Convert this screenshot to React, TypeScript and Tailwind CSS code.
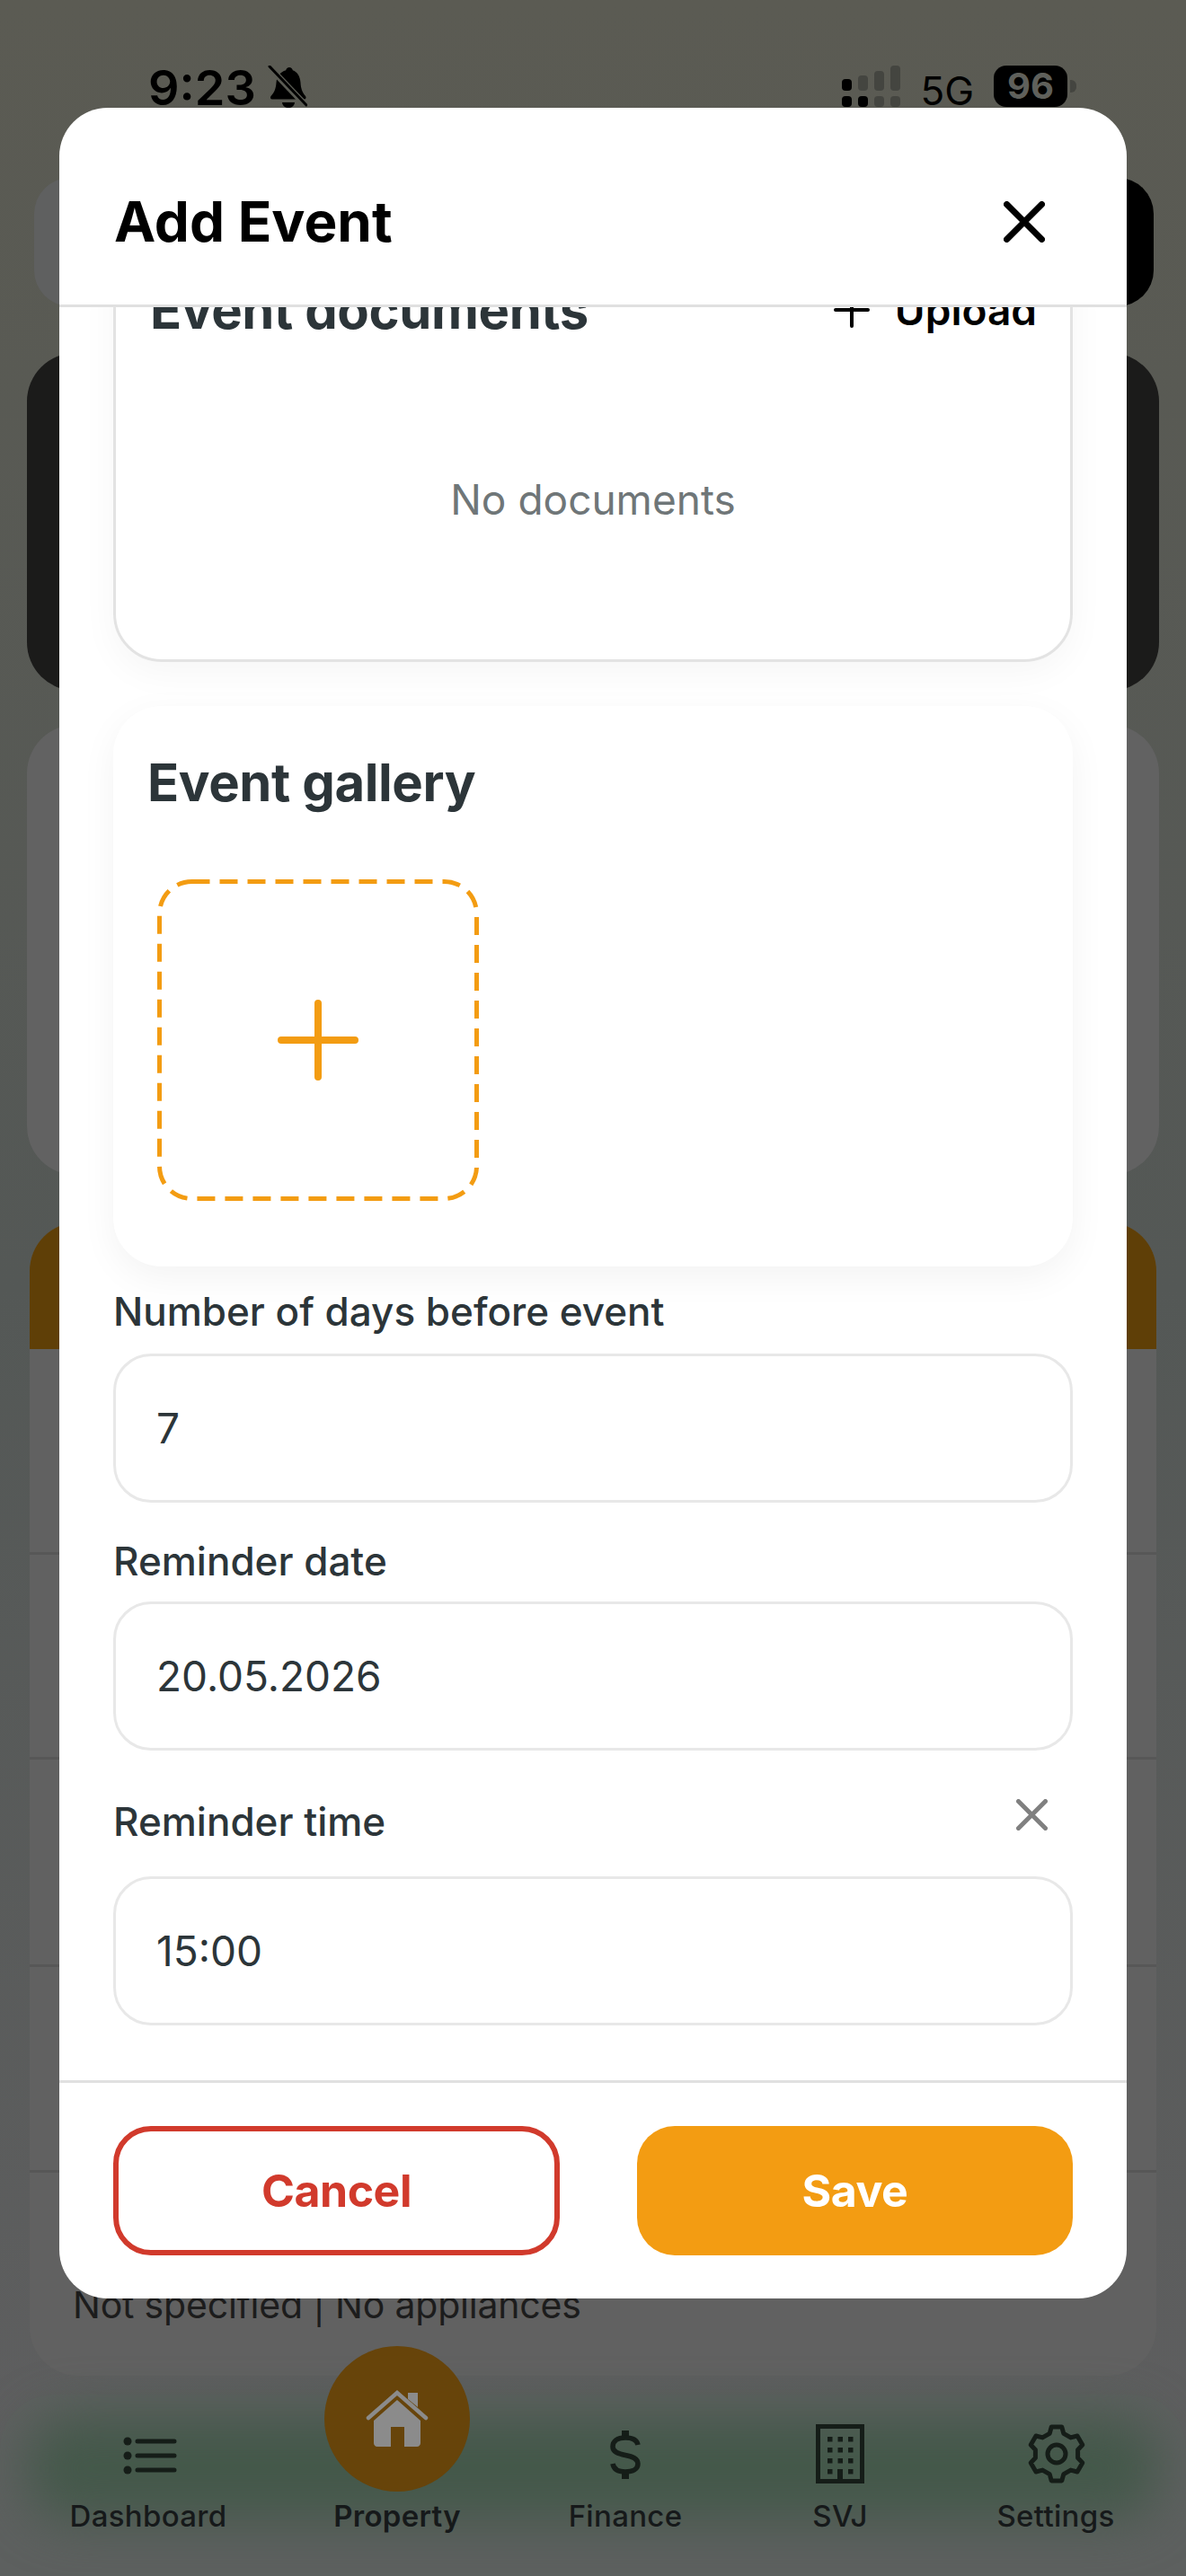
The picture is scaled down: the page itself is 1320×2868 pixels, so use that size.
const font = { fontFamily: 'Inter, sans-serif' };

const NAV = ['Dashboard', 'Property', 'Finance', 'SVJ', 'Settings'];
const NAV_X = [165, 442, 696, 935, 1175];

function Cross({ size, stroke, className }: { size: number; stroke: number; className?: string }) {
  return (
    <svg width={size} height={size} viewBox={`0 0 ${size} ${size}`} className={className} fill="none" stroke="currentColor" strokeWidth={stroke} strokeLinecap="round">
      <path d={`M${stroke / 2} ${stroke / 2}L${size - stroke / 2} ${size - stroke / 2}M${size - stroke / 2} ${stroke / 2}L${stroke / 2} ${size - stroke / 2}`} />
    </svg>
  );
}

function Plus({ size, stroke, className }: { size: number; stroke: number; className?: string }) {
  return (
    <svg width={size} height={size} viewBox={`0 0 ${size} ${size}`} className={className} fill="none" stroke="currentColor" strokeWidth={stroke} strokeLinecap="round">
      <path d={`M${size / 2} ${stroke / 2}V${size - stroke / 2}M${stroke / 2} ${size / 2}H${size - stroke / 2}`} />
    </svg>
  );
}

function BellOff() {
  return (
    <svg width="44" height="50" viewBox="0 0 44 50" className="mt-[3px] ml-[13px]">
      <path d="M24 2c2 0 3.500 1.500 3.800 3.200C33 7 36 12 36.500 19c.4 6 1.500 10 5.500 15 1.200 1.500.5 3.500-1.500 3.500H5c-2 0-2.700-2-1.500-3.500C8 29 9 25 9.500 19 10 12 14 7 20.200 5.200 20.500 3.500 22 2 24 2z" fill="#000" />
      <path d="M16 41h14c-.5 4-3.500 6-7 6s-6.500-2-7-6z" fill="#000" />
      <path d="M1 1l42 44" stroke="#5a5b53" strokeWidth="7" />
      <path d="M2 1l41 43" stroke="#000" strokeWidth="3" strokeLinecap="round" />
    </svg>
  );
}

function Signal() {
  const cols = [
    { h: 13, top: 'bg-black', bottom: 'bg-black' },
    { h: 17, top: 'bg-[#444540]', bottom: 'bg-black' },
    { h: 22, top: 'bg-[#444540]', bottom: 'bg-[#444540]' },
    { h: 28, top: 'bg-[#444540]', bottom: 'bg-[#444540]' },
  ];
  return (
    <div className="flex items-end gap-[7px]">
      {cols.map((c, i) => (
        <div key={i} className="flex flex-col gap-[6px]">
          <div className={`w-[11px] rounded-[4px] ${c.top}`} style={{ height: c.h }} />
          <div className={`w-[11px] h-[12px] rounded-[4px] ${c.bottom}`} />
        </div>
      ))}
    </div>
  );
}

function HomeIcon() {
  return (
    <svg width="70" height="64" viewBox="0 0 70 64">
      <path d="M47 3h11v16L47 10z" fill="#8b8b8b" />
      <path d="M3 31L35 3l32 28" fill="none" stroke="#8b8b8b" strokeWidth="4.500" strokeLinecap="round" />
      <path d="M35 11l26 23v25c0 2-1.500 4-4 4H43V41H28v22H13c-2.500 0-4-2-4-4V34z" fill="#8b8b8b" />
    </svg>
  );
}

function ListIcon() {
  return (
    <svg width="60" height="42" viewBox="0 0 60 42" fill="none" stroke="#151d18" strokeWidth="5" strokeLinecap="round">
      <circle cx="5" cy="5" r="4.500" fill="#151d18" stroke="none" />
      <circle cx="5" cy="21" r="4.500" fill="#151d18" stroke="none" />
      <circle cx="5" cy="37" r="4.500" fill="#151d18" stroke="none" />
      <path d="M16 5h41M16 21h41M16 37h41" />
    </svg>
  );
}

function DollarIcon() {
  return (
    <svg width="36" height="56" viewBox="0 0 36 56" fill="none" stroke="#151d18">
      <path d="M18 1v8M18 47v8" strokeWidth="8" />
      <path d="M32 17c-1-5-6-8-14-8C9 9 4 13 4 19c0 6 6 8 14 9.500 8 1.500 14 3.500 14 9.500 0 6-5.500 9-14 9-8 0-13-3-14-9" strokeWidth="5.500" />
    </svg>
  );
}

function BuildingIcon() {
  const dots: number[][] = [];
  [14, 26, 38].forEach((y) => [13, 24.5, 36].forEach((x) => dots.push([x, y])));
  return (
    <svg width="54" height="66" viewBox="0 0 54 66">
      <path d="M0 0h54v66H0z M5 5v56h19V50h6v11h19V5z" fill="#151d18" fillRule="evenodd" />
      {dots.map(([x, y]) => (
        <rect key={`${x}-${y}`} x={x} y={y} width="5.500" height="5.500" fill="#151d18" />
      ))}
      <rect x="13" y="50" width="5.500" height="5.500" fill="#151d18" />
      <rect x="36" y="50" width="5.500" height="5.500" fill="#151d18" />
    </svg>
  );
}

function GearIcon() {
  const pts: string[] = [];
  for (let i = 0; i < 6; i++) {
    const a = -90 + i * 60;
    [[24, -19], [30.5, -11], [30.5, 11], [24, 19]].forEach(([r, d]) => {
      const t = ((a + d) * Math.PI) / 180;
      pts.push(`${(33 + r * Math.cos(t)).toFixed(1)} ${(33 + r * Math.sin(t)).toFixed(1)}`);
    });
  }
  return (
    <svg width="66" height="66" viewBox="0 0 66 66" fill="none" stroke="#151d18" strokeWidth="5" strokeLinejoin="round">
      <path d={`M${pts.join('L')}Z`} />
      <circle cx="33" cy="33" r="10" />
    </svg>
  );
}

function Field({ label, className, action }: { label: string; className: string; action?: boolean }) {
  return (
    <div className={`flex items-center justify-between h-[54px] ${className}`}>
      <span className="text-[44px] leading-[54px] font-medium text-[#2c3539]">{label}</span>
      {action && <Cross size={35} stroke={5} className="text-[#808080] mr-[28px] mt-[-16px]" />}
    </div>
  );
}

function Input({ value }: { value: string }) {
  return (
    <div className="h-[166px] rounded-[42px] border-[3px] border-[#e8e8e8] flex items-center pl-[45px] text-[46px] text-[#2c3539]">
      {value}
    </div>
  );
}

export default function App() {
  return (
    <div style={font} className="relative w-[1320px] h-[2868px] overflow-hidden flex flex-col bg-linear-to-b from-[#5b5b53] via-[#545856] to-[#5f5f60]">
      {/* status bar */}
      <div className="h-[198px] flex items-start justify-between pl-[165px] pr-[122px] pt-[70px]">
        <div className="flex items-start">
          <span className="text-[54px] leading-[56px] font-semibold text-black">9:23</span>
          <BellOff />
        </div>
        <div className="flex items-start">
          <div className="mt-[3px]"><Signal /></div>
          <span className="ml-[22px] mt-[7px] text-[44px] leading-[48px] text-black">5G</span>
          <div className="ml-[22px] mt-[3px] w-[82px] h-[46px] rounded-[14px] bg-black flex items-center justify-center text-[40px] leading-none font-bold text-[#5f605b]">96</div>
          <div className="ml-[3px] mt-[19px] w-[7px] h-[14px] rounded-r-[6px] bg-[#444540]" />
        </div>
      </div>

      {/* page behind the modal */}
      <div className="flex justify-between pl-[38px] pr-[36px]">
        <div className="w-[900px] h-[143px] rounded-[40px] bg-[#5f6060]" />
        <div className="w-[180px] h-[143px] rounded-[40px] bg-black" />
      </div>
      <div className="mt-[52px] mx-[30px] h-[376px] rounded-[54px] bg-[#1b1b1a]" />
      <div className="mt-[38px] mx-[30px] h-[501px] rounded-[54px] bg-[#626262]" />
      <div className="mt-[53px] mx-[33px] h-[1284px] rounded-[54px] overflow-hidden bg-[#616161] flex flex-col">
        <div className="h-[141px] shrink-0 bg-[#5f3f07]" />
        <div className="h-[229px] shrink-0 border-b-[3px] border-[#575757]" />
        <div className="h-[228px] shrink-0 border-b-[3px] border-[#575757]" />
        <div className="h-[231px] shrink-0 border-b-[3px] border-[#575757]" />
        <div className="h-[229px] shrink-0 border-b-[3px] border-[#575757]" />
        <div className="pl-[48px] pt-[120px] text-[41px] leading-[54px] tracking-[-0.2px] text-[#1c1c1c]">Not specified | No appliances</div>
      </div>

      {/* bottom nav */}
      <div className="relative mt-[21px] flex-1 rounded-t-[60px] bg-[#5d605f]">
        <div className="absolute left-[30px] right-[30px] top-[24px] h-[116px] rounded-[50px] bg-[#44584a] blur-[28px]" />
        <div className="absolute left-[361px] top-[-54px] w-[162px] h-[162px] rounded-full bg-[#67440a] flex items-center justify-center">
          <HomeIcon />
        </div>
        <div className="absolute left-[137px] top-[47px]"><ListIcon /></div>
        <div className="absolute left-[678px] top-[39px]"><DollarIcon /></div>
        <div className="absolute left-[908px] top-[33px]"><BuildingIcon /></div>
        <div className="absolute left-[1143px] top-[33px]"><GearIcon /></div>
        {NAV.map((label, i) => (
          <span
            key={label}
            className={`absolute top-[115px] text-[33px] leading-[40px] tracking-[0.3px] text-[#16191a] ${i === 1 ? 'font-semibold' : 'font-medium'}`}
            style={{ left: NAV_X[i], transform: 'translateX(-50%)' }}
          >
            {label}
          </span>
        ))}
      </div>

      {/* modal */}
      <div className="absolute left-[66px] top-[120px] w-[1188px] h-[2439px] rounded-[54px] bg-white overflow-hidden flex flex-col">
        <div className="h-[222px] shrink-0 border-b-[3px] border-[#e0e0e0] flex items-center justify-between pl-[61px] pr-[91px] pt-[34px]">
          <span className="text-[62px] leading-[72px] font-bold text-black">Add Event</span>
          <Cross size={46} stroke={7} className="text-black" />
        </div>

        <div className="flex-1 overflow-hidden px-[60px]">
          <div className="mt-[-82px] h-[477px] rounded-[54px] border-[3px] border-[#e3e3e3] shadow-[0_12px_40px_rgba(0,0,0,0.04)] flex flex-col">
            <div className="flex items-center justify-between pl-[38px] pr-[37px] pt-[50px]">
              <span className="text-[58px] leading-[64px] font-bold tracking-[-0.4px] text-[#2c3539]">Event documents</span>
              <span className="flex items-center text-[46px] leading-[56px] font-semibold text-black">
                <Plus size={40} stroke={4} className="mr-[28px]" />
                Upload
              </span>
            </div>
            <div className="mt-[151px] text-center text-[46px] leading-[56px] text-[#6f7678]">No documents</div>
          </div>

          <div className="mt-[49px] h-[624px] rounded-[54px] bg-white shadow-[0_12px_40px_rgba(0,0,0,0.05)] pl-[38px] pt-[53px]">
            <div className="text-[58px] leading-[64px] font-bold tracking-[-0.4px] text-[#2c3539]">Event gallery</div>
            <div className="relative mt-[76px] ml-[11px] w-[358px] h-[358px] flex items-center justify-center text-[#f39c12]">
              <svg width="358" height="358" viewBox="0 0 358 358" className="absolute inset-0" fill="none" stroke="#f39c12" strokeWidth="5">
                <rect x="2.500" y="2.500" width="353" height="353" rx="36" strokeDasharray="20 11" />
              </svg>
              <Plus size={90} stroke={8} />
            </div>
          </div>

          <Field label="Number of days before event" className="mt-[23px] mb-[20px]" />
          <Input value="7" />
          <Field label="Reminder date" className="mt-[38px] mb-[18px]" />
          <Input value="20.05.2026" />
          <Field label="Reminder time" className="mt-[52px] mb-[34px]" action />
          <Input value="15:00" />
        </div>

        <div className="h-[243px] shrink-0 border-t-[3px] border-[#e0e0e0] px-[60px] pt-[48px] flex justify-between items-start">
          <div className="w-[497px] h-[144px] rounded-[42px] border-[6px] border-[#d13a2c] flex items-center justify-center text-[50px] font-bold tracking-[-0.5px] text-[#d13a2c]">Cancel</div>
          <div className="w-[485px] h-[144px] rounded-[42px] bg-[#f39c12] flex items-center justify-center text-[50px] font-bold tracking-[-0.5px] text-white">Save</div>
        </div>
      </div>
    </div>
  );
}
